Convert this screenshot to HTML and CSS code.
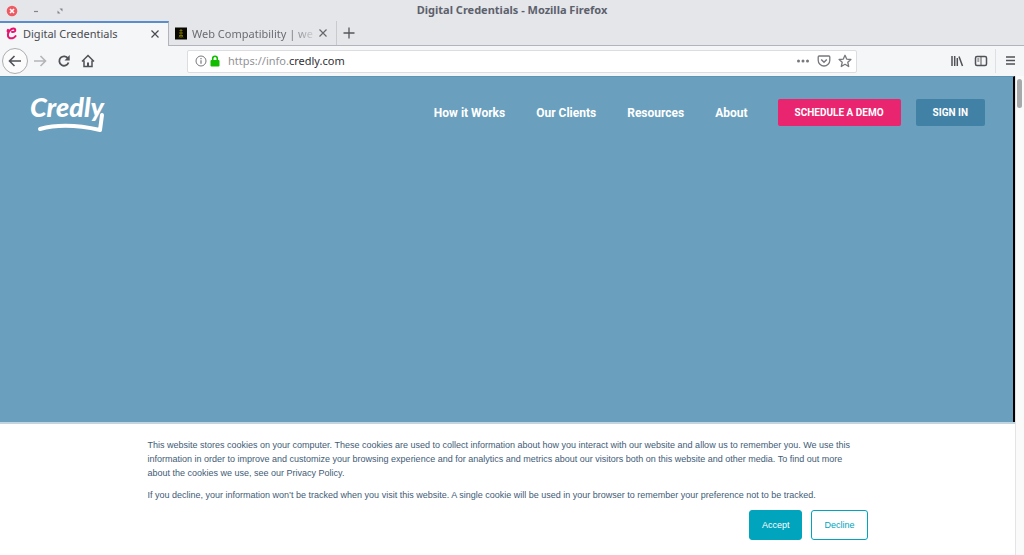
FILE: index.html
```
<!DOCTYPE html>
<html lang="en">
<head>
<meta charset="utf-8">
<title>Digital Credentials</title>
<link rel="stylesheet" href="styles.css">
</head>
<body>
<div class="window">
  <header class="titlebar">
    <div class="window-controls">
      <button class="window-button" aria-label="Close window"><svg width="12" height="12" viewBox="0 0 12 12"><circle cx="6" cy="6" r="5.3" fill="#ee5a62"/><path d="M4 4l4 4M8 4l-4 4" stroke="#fff" stroke-width="1.6"/></svg></button>
      <button class="window-button" aria-label="Minimize"><svg width="12" height="12" viewBox="0 0 12 12"><path d="M4 6.5h4" stroke="#80848c" stroke-width="1.2"/></svg></button>
      <button class="window-button" aria-label="Maximize"><svg width="12" height="12" viewBox="0 0 12 12"><path d="M5.500 3.500h3v3zM3.500 5.500v3h3z" fill="#80848c"/></svg></button>
    </div>
    <div class="window-title">Digital Credentials - Mozilla Firefox</div>
    <div class="titlebar-end"></div>
  </header>

  <div class="tabs">
    <div class="tab tab-active">
      <svg class="favicon" width="12" height="13" viewBox="0 0 12 13"><path d="M6 4.800C7.500 5.500 9.500 4.500 9.300 2.800C9 1 6 1.200 4 3.200C1.500 5.800 1.300 9 3 10.600C4.800 12 8 11.300 9.600 9M2 2.800C1.300 4 1.500 5 2.500 5.300" fill="none" stroke="#e5156f" stroke-width="2" stroke-linecap="round"/></svg>
      <span class="tab-title">Digital Credentials</span>
      <button class="tab-close" aria-label="Close tab"><svg width="10" height="10" viewBox="0 0 10 10"><path d="M1.500 1.500l7 7M8.500 1.500l-7 7" stroke="#4a4b50" stroke-width="1.200"/></svg></button>
    </div>
    <div class="tab tab-idle">
      <svg class="favicon" width="12" height="13" viewBox="0 0 12 13"><path d="M0 .5h12v12H0z" fill="#080800"/><path d="M6 2v9M4.500 3.500h3M4 6h4M4 8.500h4M4 10.500L5 9M8 10.500L7 9" stroke="#776d00"/></svg>
      <span class="tab-title tab-title-fade">Web Compatibility | web</span>
      <button class="tab-close" aria-label="Close tab"><svg width="10" height="10" viewBox="0 0 10 10"><path d="M1.500 1.500l7 7M8.500 1.500l-7 7" stroke="#66676c" stroke-width="1.200"/></svg></button>
    </div>
    <button class="new-tab" aria-label="New tab"><svg width="12" height="12" viewBox="0 0 12 12"><path d="M6 .5v11M.5 6h11" stroke="#55565b" stroke-width="1.300"/></svg></button>
  </div>

  <div class="toolbar">
    <div class="tool-group">
      <button class="back" aria-label="Back"><svg width="14" height="14" viewBox="0 0 14 14"><path d="M13 7H1.800M6.500 2L1.500 7l5 5" class="line-dark"/></svg></button>
      <button class="tool" aria-label="Forward"><svg width="14" height="14" viewBox="0 0 14 14"><path d="M1 7h11.200M7.500 2l5 5-5 5" class="line-light"/></svg></button>
      <button class="tool" aria-label="Reload"><svg width="14" height="14" viewBox="0 0 14 14"><path d="M11 4.500A4.700 4.700 0 1 0 11.500 8.500" class="line-bold"/><path d="M12.700 1v5.500H7.500z" fill="#505257"/></svg></button>
      <button class="tool" aria-label="Home"><svg width="14" height="14" viewBox="0 0 14 14"><path d="M1 7.500l6-6 6 6M3 6.500v6h8v-6" class="line-home"/><path d="M7 12V8.500" stroke="#505257" stroke-width="2"/></svg></button>
    </div>
    <div class="address">
      <svg width="12" height="12" viewBox="0 0 12 12"><circle cx="6" cy="6" r="5" fill="none" stroke="#77787d"/><path d="M6 5.200v3.500M6 3v1.200" stroke="#77787d" stroke-width="1.200"/></svg>
      <svg class="lock" width="10" height="12" viewBox="0 0 10 12"><rect x=".5" y="5" width="9" height="6.500" rx="1" fill="#12bc00"/><path d="M2.700 6V3.500a2.300 2.300 0 0 1 4.600 0V6" fill="none" stroke="#12bc00" stroke-width="1.600"/></svg>
      <div class="url"><span class="url-dim">https://info.</span>credly.com</div>
      <button class="address-button" aria-label="Page actions"><svg width="14" height="14" viewBox="0 0 14 14" fill="#77787d"><circle cx="2.500" cy="7" r="1.500"/><circle cx="7" cy="7" r="1.500"/><circle cx="11.500" cy="7" r="1.500"/></svg></button>
      <button class="address-button" aria-label="Save to Pocket"><svg width="14" height="14" viewBox="0 0 14 14" fill="none" stroke="#77787d" stroke-width="1.300"><path d="M2.200 2h9.600q1 0 1 1v3.200a5.800 5.800 0 0 1-11.600 0V3q0-1 1-1z"/><path d="M4.200 5.500L7 8.200l2.800-2.700" stroke-width="1.500"/></svg></button>
      <button class="address-button" aria-label="Bookmark"><svg width="14" height="14" viewBox="0 0 14 14"><path d="M7 1.300l1.700 3.800 4.200.4-3.100 2.800.9 4.200L7 10.300l-3.700 2.200.9-4.200L1.100 5.500l4.200-.4z" fill="none" stroke="#77787d" stroke-width="1.300" stroke-linejoin="round"/></svg></button>
    </div>
    <div class="tool-group tool-group-end">
      <button class="tool" aria-label="Library"><svg width="14" height="14" viewBox="0 0 14 14"><path d="M2 2v10M4.700 2v10M7.300 4v8M9 2.500l3.500 9.500" fill="none" stroke="#505257" stroke-width="1.500"/></svg></button>
      <button class="tool" aria-label="Sidebars"><svg width="14" height="14" viewBox="0 0 14 14"><rect x="1.500" y="2.500" width="11" height="9" rx="1.500" fill="none" stroke="#505257" stroke-width="1.500"/><path d="M7 2.500v9M3.300 5h2M3.300 7h2" stroke="#505257"/></svg></button>
      <span class="divider"></span>
      <button class="tool menu" aria-label="Menu"><svg width="12" height="14" viewBox="0 0 12 14"><path d="M1 3h9M1 6.500h9M1 10h9" stroke="#505257" stroke-width="1.500"/></svg></button>
    </div>
  </div>

  <div class="viewport">
    <div class="page">
      <main class="hero">
        <a class="logo" href="#" aria-label="Credly home">
          <svg width="78" height="44" viewBox="0 0 78 44">
            <text x="2" y="26" class="logo-word">Credly</text>
            <path d="M12 38C30 33 50 34 72 39L74 24" class="logo-swoosh"/>
          </svg>
        </a>
        <nav class="nav">
          <a class="nav-link" href="#">How it Works</a>
          <a class="nav-link" href="#">Our Clients</a>
          <a class="nav-link" href="#">Resources</a>
          <a class="nav-link" href="#">About</a>
        </nav>
        <a class="cta cta-demo" href="#">SCHEDULE A DEMO</a>
        <a class="cta cta-sign" href="#">SIGN IN</a>
      </main>
      <section class="cookies" aria-label="Cookie notice">
        <div class="cookies-inner">
          <p class="cookies-text">This website stores cookies on your computer. These cookies are used to collect information about how you interact with our website and allow us to remember you. We use this information in order to improve and customize your browsing experience and for analytics and metrics about our visitors both on this website and other media. To find out more about the cookies we use, see our Privacy Policy.</p>
          <p class="cookies-text">If you decline, your information won’t be tracked when you visit this website. A single cookie will be used in your browser to remember your preference not to be tracked.</p>
          <div class="cookies-actions">
            <button class="choice choice-accept">Accept</button>
            <button class="choice">Decline</button>
          </div>
        </div>
      </section>
    </div>
    <div class="scrollbar"><div class="thumb"></div></div>
  </div>
</div>
</body>
</html>
```
FILE: styles.css
```
* { box-sizing: border-box; }
body { margin: 0; font-family: "Noto Sans", "Open Sans", sans-serif; font-size: 11px; color: #4a4b50; }
button { margin: 0; padding: 0; border: 0; background: none; font: inherit; color: inherit; display: flex; align-items: center; justify-content: center; }
a { color: inherit; text-decoration: none; }
svg { display: block; flex: none; }
.window { display: flex; flex-direction: column; min-height: 100vh; background: #e5e6ea; }

.titlebar { display: flex; align-items: center; height: 21px; padding: 0 6px; }
.window-controls, .titlebar-end { flex: 1; display: flex; gap: 12px; }
.window-title { font-weight: 700; color: #5c616c; line-height: 18px; padding-bottom: 2px; }

.tabs { display: flex; height: 25px; box-shadow: inset 0 -1px #b3b4bb; }
.tab { display: flex; align-items: center; width: 168px; padding: 0 8px 0 6px; gap: 5px; }
.tab-active { width: 169px; padding-bottom: 2px; background: #f5f6f7; border-top: 2px solid #5a8dcb; border-right: 1px solid #b3b4bb; }
.tab-idle { color: #6b6c72; border-right: 1px solid #c9cace; height: 24px; }
.tab-title { flex: 1; min-width: 0; white-space: nowrap; }
.tab-title-fade { -webkit-mask-image: linear-gradient(90deg, #000 80%, #0003); mask-image: linear-gradient(90deg, #000 80%, #0003); }
.new-tab { width: 24px; height: 24px; }

.toolbar { display: flex; align-items: center; height: 30px; background: #f5f6f7; padding: 0 6px 0 2px; }
.tool-group { display: flex; align-items: center; width: 185px; gap: 10px; }
.tool-group-end { flex: 1; justify-content: flex-end; width: auto; }
.tool { width: 14px; height: 24px; }
.back { width: 26px; height: 26px; border: 1px solid #acadb1; border-radius: 50%; background: #fbfbfc; margin-right: -5px; }
.line-dark { fill: none; stroke: #505257; stroke-width: 1.6; }
.line-light { fill: none; stroke: #b4b5b9; stroke-width: 1.6; }
.line-bold { fill: none; stroke: #505257; stroke-width: 1.8; }
.line-home { fill: none; stroke: #505257; stroke-width: 1.5; }
.address { display: flex; align-items: center; flex: 0 1 670px; height: 23px; padding: 0 4px 0 7px; background: #fff; border: 1px solid #dcdde0; border-radius: 2px; }
.lock { margin-left: 3px; }
.url { flex: 1; padding: 0 0 2px 8px; color: #303136; }
.url-dim { color: #929398; }
.address-button { width: 14px; margin-left: 7px; }
.divider { width: 1px; height: 24px; margin-left: -3px; background: #dfe0e3; }
.menu { margin-left: -2px; }

.viewport { display: flex; flex: 1; }
.page { display: flex; flex-direction: column; flex: 1; }
.scrollbar { width: 9px; background: #fafafa; padding: 3px 1px; border-left: 1px solid #e4e4e6; }
.thumb { width: 5px; height: 29px; border-radius: 3px; background: #a9a9ab; }

.hero { flex: 1; display: flex; align-items: flex-start; padding: 14px 28px; background: #6a9fbe; border-top: 1px solid #5d93b4; border-right: 2px solid #000; font-family: Roboto, sans-serif; color: #fff; font-weight: 700; }
.logo { margin-right: auto; }
.logo-word { font: italic 900 27px Lato, sans-serif; fill: #fff; }
.logo-swoosh { fill: none; stroke: #fff; stroke-width: 4; stroke-linecap: round; stroke-linejoin: round; }
.nav { display: flex; gap: 31px; margin: 8px 30px 0 0; }
.nav-link { font-size: 12px; line-height: 28px; white-space: nowrap; }
.cta { margin-top: 8px; font-size: 10px; line-height: 27px; padding: 0 17px; border-radius: 2px; white-space: nowrap; }
.cta-demo { background: #ea256f; margin-right: 15px; }
.cta-sign { background: #4281a6; }

.cookies { padding: 14px 24px 15px; background: #fff; border-top: 2px solid #c2d4df; font-family: "Liberation Sans", Arial, sans-serif; font-size: 9px; line-height: 14px; color: #425b76; }
.cookies-inner { max-width: 720px; margin: 0 auto; }
.cookies-text { max-width: 716px; margin: 0 0 8px; }
.cookies-actions { display: flex; justify-content: flex-end; gap: 9px; }
.choice { height: 30px; padding: 0 12px; border: 1px solid #00a4bd; border-radius: 3px; color: #00a4bd; }
.choice-accept { background: #00a4bd; color: #fff; }
```
